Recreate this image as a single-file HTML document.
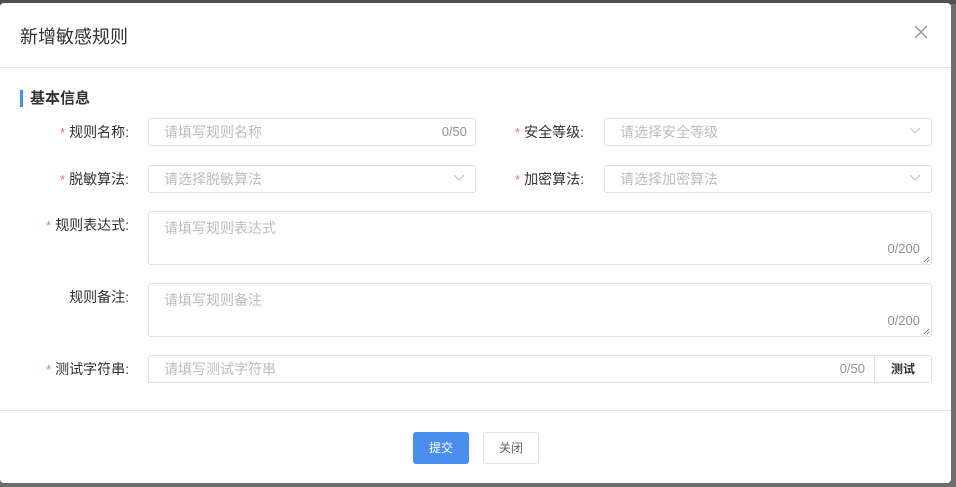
<!DOCTYPE html>
<html><head><meta charset="utf-8"><style>
*{box-sizing:border-box;margin:0;padding:0}
body{width:956px;height:487px;overflow:hidden;background:#6e6e6e;font-family:"Liberation Sans","Noto Sans CJK SC",sans-serif;position:relative}
.top{position:absolute;left:0;top:0;width:956px;height:4px;background:#4b5058}
.dlg{position:absolute;left:0;top:3px;width:951px;height:480px;background:#fff;border-radius:4px}
.abs{position:absolute}
.t{left:20px;top:20px;font-size:18px;color:#303133}
.x{left:914px;top:22px}
.hl{left:0;width:951px;height:1px;background:#e6e6e6}
.sec{left:20px;top:87px;height:17px;border-left:3px solid #4a8de9;padding-left:7px;font-size:15px;font-weight:bold;color:#303133;line-height:17px}
.lbl{font-size:14px;color:#303133;text-align:right;width:129px;left:0;line-height:28px}
.lbl b{color:#f56c6c;font-weight:normal;margin-right:4px;font-size:13px}
.in{border:1px solid #dcdfe6;border-radius:3px;font-size:14px;color:#b8bcc4;padding-left:15px;line-height:26px}
.cnt{position:absolute;right:8px;color:#909399;font-size:13px}
.ta{line-height:20px;padding-top:6px}
.arr{position:absolute;right:10px;top:8px}
.grip{position:absolute;right:1px;bottom:1px}
.btn{border-radius:3px;font-size:12px;text-align:center;line-height:32px;width:56px;height:32px}
</style></head><body>
<div class="top"></div>
<div class="dlg">
<div class="abs t">新增敏感规则</div>
<svg class="abs x" width="14" height="14" viewBox="0 0 14 14"><path d="M1 1L13 13M13 1L1 13" stroke="#909399" stroke-width="1.3"/></svg>
<div class="abs hl" style="top:64px"></div>
<div class="abs sec">基本信息</div>

<div class="abs lbl" style="top:115px"><b>*</b>规则名称:</div>
<div class="abs in" style="left:148px;top:115px;width:328px;height:28px">请填写规则名称<span class="cnt">0/50</span></div>
<div class="abs lbl" style="top:115px;left:455px"><b>*</b>安全等级:</div>
<div class="abs in" style="left:604px;top:115px;width:328px;height:28px">请选择安全等级<svg class="arr" width="12" height="8"><path d="M1 1L6 6L11 1" fill="none" stroke="#c0c4cc"/></svg></div>

<div class="abs lbl" style="top:162px"><b>*</b>脱敏算法:</div>
<div class="abs in" style="left:148px;top:162px;width:328px;height:28px">请选择脱敏算法<svg class="arr" width="12" height="8"><path d="M1 1L6 6L11 1" fill="none" stroke="#c0c4cc"/></svg></div>
<div class="abs lbl" style="top:162px;left:455px"><b>*</b>加密算法:</div>
<div class="abs in" style="left:604px;top:162px;width:328px;height:28px">请选择加密算法<svg class="arr" width="12" height="8"><path d="M1 1L6 6L11 1" fill="none" stroke="#c0c4cc"/></svg></div>

<div class="abs lbl" style="top:208px"><b>*</b>规则表达式:</div>
<div class="abs in ta" style="left:148px;top:208px;width:784px;height:54px">请填写规则表达式<span class="cnt" style="right:11px;bottom:8px;line-height:14px">0/200</span><svg class="grip" width="7" height="7"><path d="M6 1L1 6M6 4L4 6" stroke="#606266" stroke-width="0.8"/></svg></div>
<div class="abs lbl" style="top:280px">规则备注:</div>
<div class="abs in ta" style="left:148px;top:280px;width:784px;height:54px">请填写规则备注<span class="cnt" style="right:11px;bottom:8px;line-height:14px">0/200</span><svg class="grip" width="7" height="7"><path d="M6 1L1 6M6 4L4 6" stroke="#606266" stroke-width="0.8"/></svg></div>

<div class="abs lbl" style="top:352px"><b>*</b>测试字符串:</div>
<div class="abs in" style="left:148px;top:352px;width:784px;height:28px">请填写测试字符串<span class="cnt" style="right:66px">0/50</span>
<div style="position:absolute;right:0;top:0;width:57px;height:26px;border-left:1px solid #dcdfe6;background:#fff;color:#303133;font-size:12px;font-weight:bold;text-align:center">测试</div></div>

<div class="abs hl" style="top:407px"></div>
<div class="abs btn" style="left:413px;top:429px;background:#4a8ff0;color:#fff">提交</div>
<div class="abs btn" style="left:483px;top:429px;border:1px solid #dcdfe6;color:#606266;line-height:30px">关闭</div>
</div>
</body></html>
